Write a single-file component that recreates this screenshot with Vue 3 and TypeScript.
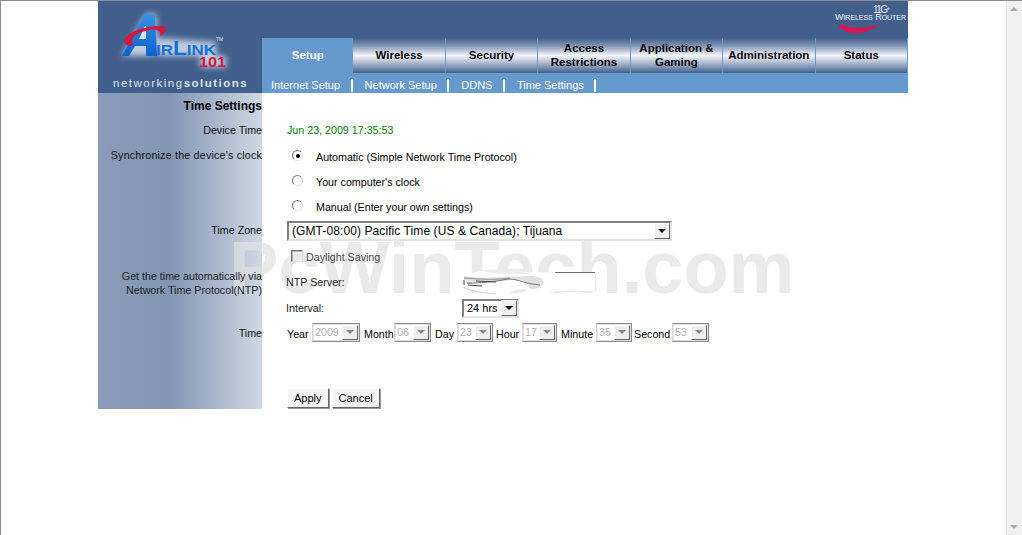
<script setup lang="ts">
const tabs = [
  { lines: ['Setup'], active: true },
  { lines: ['Wireless'] },
  { lines: ['Security'] },
  { lines: ['Access', 'Restrictions'] },
  { lines: ['Application &', 'Gaming'] },
  { lines: ['Administration'] },
  { lines: ['Status'] },
]
const subs = ['Internet Setup', 'Network Setup', 'DDNS', 'Time Settings']
const radios = [
  { label: 'Automatic (Simple Network Time Protocol)', on: true },
  { label: "Your computer's clock", on: false },
  { label: 'Manual (Enter your own settings)', on: false },
]
const times = [
  { label: 'Year', value: '2009', lw: 25, gap: 0, w: 48 },
  { label: 'Month', value: '06', lw: 30, gap: 4, w: 37 },
  { label: 'Day', value: '23', lw: 22, gap: 4, w: 36 },
  { label: 'Hour', value: '17', lw: 26, gap: 3, w: 35 },
  { label: 'Minute', value: '35', lw: 35, gap: 4, w: 36 },
  { label: 'Second', value: '53', lw: 38, gap: 2, w: 37 },
]
</script>

<template>
  <div class="page">
    <div class="frame">
      <header class="header">
        <div class="logo">
          <svg class="logo-svg" width="164" height="93" viewBox="0 0 164 93">
            <defs>
              <filter id="glow" x="-30%" y="-30%" width="160%" height="160%">
                <feGaussianBlur stdDeviation="3" />
              </filter>
              <linearGradient id="ablue" x1="0" y1="0" x2="0" y2="1">
                <stop offset="0" stop-color="#3b93e4" />
                <stop offset="1" stop-color="#0c62cc" />
              </linearGradient>
            </defs>
            <g filter="url(#glow)" opacity="0.8">
              <polygon points="24,56 48,14 58,14 60,56 118,56 118,42 60,38 56,56" fill="#dfe8f5" />
              <rect x="102" y="56" width="26" height="11" fill="#dfe8f5" />
            </g>
            <polygon points="24,56 47,14 57,14 59,56 48,56 48,46 37,46 31,56" fill="url(#ablue)" />
            <polygon points="47,26 48,26 48,39 41,39" fill="#dbe8fa" />
            <path d="M27 43 C 23 36, 42 25, 66 26 C 70 30, 66 34, 62 36 C 64 31, 60 29, 52 30 C 40 32, 30 38, 36 44 C 32 47, 28 46, 27 43 Z" fill="#d3173f" />
            <text class="logo-irlink" x="58" y="55" textLength="60" lengthAdjust="spacingAndGlyphs">IR<tspan class="logo-big">L</tspan>INK</text>
            <text class="logo-101" x="101" y="67" textLength="27" lengthAdjust="spacingAndGlyphs">101</text>
            <text class="logo-tm" x="118" y="41">TM</text>
          </svg>
          <div class="tagline">networking<b>solutions</b></div>
        </div>
        <div class="nav">
          <div class="brand">
            <svg width="90" height="36" viewBox="0 0 90 36">
              <path d="M20 25 C 30 36, 48 34, 62 23 C 48 28, 34 28, 23 23 Z" fill="#d5174f" />
              <text class="brand-11g" x="55" y="12" textLength="17">11G<tspan dy="-3" class="brand-tm">+</tspan></text>
              <text class="brand-name" x="17" y="19" textLength="71" lengthAdjust="spacing">W<tspan class="brand-sm">IRELESS</tspan> R<tspan class="brand-sm">OUTER</tspan></text>
            </svg>
          </div>
          <div class="tabs">
            <div v-for="tab in tabs" :key="tab.lines[0]" class="tab" :class="{ active: tab.active }">
              <span v-for="line in tab.lines" :key="line">{{ line }}</span>
            </div>
          </div>
          <div class="subnav">
            <span v-for="s in subs" :key="s" class="sub">{{ s }}</span>
          </div>
        </div>
      </header>

      <main class="content">
        <div class="watermark">PcWinTech.com</div>

        <div class="row title-row">
          <div class="label title">Time Settings</div>
        </div>

        <div class="row device-row">
          <div class="label">Device Time</div>
          <div class="field green">Jun 23, 2009 17:35:53</div>
        </div>

        <div class="row sync-row">
          <div class="label wide">Synchronize the device's clock</div>
          <div class="field radios">
            <div v-for="r in radios" :key="r.label" class="radio-line">
              <span class="radio" :class="{ on: r.on }"></span>
              <span>{{ r.label }}</span>
            </div>
          </div>
        </div>

        <div class="row zone-row">
          <div class="label">Time Zone</div>
          <div class="field">
            <div class="select zone">
              <span class="select-text">(GMT-08:00) Pacific Time (US &amp; Canada); Tijuana</span>
              <span class="arrow"></span>
            </div>
          </div>
        </div>

        <div class="row daylight-row">
          <div class="label"></div>
          <div class="field daylight">
            <span class="check"></span>
            <span class="faint">Daylight Saving</span>
          </div>
        </div>

        <div class="row ntp-row">
          <div class="label ntp-label">Get the time automatically via<br />Network Time Protocol(NTP)</div>
          <div class="field ntp">
            <div class="ntp-line">
              <span class="ntp-name">NTP Server:</span>
              <svg class="scribble" width="136" height="30" viewBox="0 0 136 30">
                <path d="M0 8 C 14 3, 30 0, 50 3 C 60 4, 80 5, 93 4 L 133 4 L 133 23 L 90 24 C 70 24, 60 18, 48 24 C 32 28, 12 26, 1 20 Z" fill="#fff" />
                <path d="M2 8 C 20 12, 40 8, 70 8 C 84 9, 84 16, 76 20 C 60 24, 72 13, 56 12 C 36 12, 16 16, 2 12 Z" fill="#e0e0e0" />
                <path d="M20 3 C 36 0, 54 2, 70 6 C 50 6, 34 6, 20 3 Z" fill="#ececec" />
                <path d="M93 4.500 L 133 4.500" stroke="#6e6e6e" stroke-width="1" />
                <path d="M133.500 4 V 23.500 H 92" fill="none" stroke="#ececec" stroke-width="1" />
                <path d="M2 10 C 14 11, 30 13, 48 10" fill="none" stroke="#a8a8a8" stroke-width="1.500" />
                <path d="M10 15 C 22 15, 36 13, 46 11 C 54 11, 60 14, 70 16 L 78 17" fill="none" stroke="#777" stroke-width="1" />
                <path d="M2 12 L 2 17 M5 15 L 10 15 M6 17 L 20 18 M14 13 L 34 14" stroke="#444" stroke-width="1" />
                <path d="M1 19 C 10 24, 24 25, 34 26" fill="none" stroke="#cfcfcf" stroke-width="1" />
              </svg>
            </div>
            <div class="ntp-line">
              <span class="ntp-name">Interval:</span>
              <div class="select interval">
                <span class="select-text">24 hrs</span>
                <span class="arrow"></span>
              </div>
            </div>
          </div>
        </div>

        <div class="row time-row">
          <div class="label">Time</div>
          <div class="field times">
            <template v-for="t in times" :key="t.label">
              <span class="time-label" :style="{ width: t.lw + 'px', marginLeft: t.gap + 'px' }">{{ t.label }}</span>
              <div class="select disabled" :style="{ width: t.w + 'px' }">
                <span class="select-text">{{ t.value }}</span>
                <span class="arrow"></span>
              </div>
            </template>
          </div>
        </div>

        <div class="row button-row">
          <div class="label"></div>
          <div class="field buttons">
            <button class="btn" type="button">Apply</button>
            <button class="btn" type="button">Cancel</button>
          </div>
        </div>
      </main>
    </div>
    <aside class="scrollbar">
      <span class="sb-up"></span>
      <span class="sb-down"></span>
    </aside>
  </div>
</template>

<style>
html, body { margin: 0; padding: 0; background: #fff; overflow: hidden; }
</style>

<style scoped>
.page {
  position: relative;
  box-sizing: border-box;
  width: 1022px;
  height: 535px;
  padding: 1px 16px 0 97px;
  border-top: 1px solid #8c8c8c;
  border-left: 1px solid #8c8c8c;
  background: #fff;
  font-family: "Liberation Sans", Arial, sans-serif;
  font-size: 10.7px;
  color: #000;
  overflow: hidden;
}
.frame {
  width: 810px;
  margin-top: -1px;
}
.header {
  display: flex;
  height: 92px;
  background: #425f8c;
}
.logo {
  position: relative;
  width: 164px;
  flex: none;
  margin-top: -1px;
}
.logo-svg { display: block; }
.logo-irlink { font: bold 15px "Liberation Sans", sans-serif; fill: #1270d8; }
.logo-big { font-size: 20px; }
.logo-101 { font: bold 15px "Liberation Sans", sans-serif; fill: #d3173f; }
.logo-tm { font: 5px "Liberation Sans", sans-serif; fill: #dfe8f5; }
.tagline {
  position: absolute;
  left: 15px;
  top: 76px;
  color: #dfe3ea;
  font-size: 11.5px;
  letter-spacing: 1.5px;
  white-space: nowrap;
  line-height: 14px;
}
.tagline b { font-weight: bold; }
.nav {
  position: relative;
  flex: 1;
  display: flex;
  flex-direction: column;
}
.brand {
  position: absolute;
  top: 0;
  right: 0;
}
.brand svg { display: block; }
.brand-11g { font: 10px "Liberation Sans", sans-serif; fill: #e8ecf3; }
.brand-tm { font-size: 6px; }
.brand-name { font: 9px "Liberation Sans", sans-serif; fill: #f0f3f8; }
.brand-sm { font-size: 7px; }
.tabs {
  display: flex;
  margin-top: 37px;
  height: 35px;
}
.tab {
  flex: 1 1 0;
  box-sizing: border-box;
  display: flex;
  flex-direction: column;
  align-items: center;
  justify-content: center;
  padding-bottom: 2px;
  border-right: 1px solid #6699cc;
  background: linear-gradient(#425f8c 0, #7f93b3 22%, #f4f5f8 50%, #8ea0bd 80%, #425f8c 100%);
  font-weight: bold;
  font-size: 11.5px;
  line-height: 14px;
  text-align: center;
}
.tab.active {
  background: #6699cc;
  color: #fff;
  border-right: 0;
}
.subnav {
  flex: 1;
  display: flex;
  align-items: center;
  background: #6699cc;
  color: #fff;
  font-size: 11px;
}
.sub {
  display: flex;
  align-items: center;
  height: 13px;
  padding: 0 10.5px 0 12px;
  border-right: 2px solid #fff;
  margin-top: 4px;
  white-space: nowrap;
}
.sub:first-child { padding-left: 9px; }
.content {
  position: relative;
  height: 316px;
  background: linear-gradient(90deg, #8a9bb8 0, #8296b4 44%, #cfd8e4 100%) 0 0 / 164px 100% no-repeat;
}
.watermark {
  position: absolute;
  left: 131px;
  top: 140px;
  font-size: 74px;
  line-height: 70px;
  font-weight: bold;
  color: rgba(225, 225, 225, .7);
  white-space: nowrap;
}
.row {
  position: relative;
  display: flex;
}
.label {
  width: 164px;
  flex: none;
  box-sizing: border-box;
  text-align: right;
  color: #111;
  line-height: 13px;
}
.label.wide { letter-spacing: .2px; white-space: nowrap; }
.title {
  font-size: 12px;
  font-weight: bold;
  line-height: 14px;
  color: #000;
}
.field { margin-left: 25px; line-height: 13px; }
.title-row { padding-top: 6px; height: 25px; box-sizing: border-box; }
.device-row { padding-top: 6px; height: 31px; box-sizing: border-box; }
.green { color: #008000; }
.sync-row { height: 72px; }
.radios {
  display: flex;
  flex-direction: column;
  gap: 12px;
  margin-left: 25px;
  padding-top: 2px;
}
.radio-line {
  display: flex;
  align-items: center;
  height: 13px;
  gap: 13px;
  padding-left: 5px;
}
.radio {
  position: relative;
  top: -2px;
  width: 11px;
  height: 11px;
  box-sizing: border-box;
  border-radius: 50%;
  border: 1px solid;
  border-color: #777 #ddd #e8e8e8 #777;
  background: #fff;
  display: flex;
  align-items: center;
  justify-content: center;
}
.radio.on::after {
  content: "";
  width: 4px;
  height: 4px;
  border-radius: 50%;
  background: #000;
}
.zone-row { height: 29px; }
.zone-row .label { padding-top: 3px; }
.select {
  display: flex;
  align-items: center;
  justify-content: space-between;
  box-sizing: border-box;
  height: 20px;
  border: 2px solid;
  border-color: #808080 #e4e4e4 #e4e4e4 #808080;
  background: #fff;
}
.select-text { padding-left: 3px; white-space: nowrap; }
.zone { width: 385px; font-size: 12px; letter-spacing: .09px; }
.arrow {
  position: relative;
  flex: none;
  width: 16px;
  height: 16px;
  box-sizing: border-box;
  background: #f1f1f1;
  border: 1px solid;
  border-color: #fff #666 #666 #fff;
}
.arrow::after {
  content: "";
  position: absolute;
  left: 3px;
  top: 5px;
  border-style: solid;
  border-width: 4px 4px 0 4px;
  border-color: #000 transparent transparent;
}
.daylight-row { height: 20px; }
.daylight { display: flex; align-items: flex-start; margin-left: 29px; }
.check {
  width: 12px;
  height: 12px;
  box-sizing: border-box;
  border: 1px solid;
  border-color: #777 #ddd #ddd #777;
  margin-right: 3px;
  background: transparent;
  box-shadow: inset 1px 1px 0 #aaa;
}
.faint { color: #444; margin-top: 1px; }
.ntp-row { height: 53px; }
.ntp-label { margin-top: -1px; color: #222; line-height: 14px; }
.ntp { margin-left: 24px; }
.ntp-line {
  position: relative;
  display: flex;
  align-items: center;
  height: 26px;
}
.ntp-line:first-child { height: 25px; }
.ntp-name { width: 176px; flex: none; color: #222; }
.scribble {
  position: absolute;
  left: 176px;
  top: -2px;
}
.interval {
  width: 57px;
  font-size: 11px;
  height: 19px;
}
.time-row { height: 65px; }
.time-row .label { padding-top: 4px; }
.times { display: flex; align-items: flex-start; margin-left: 25px; }
.time-label { flex: none; margin-top: 5px; white-space: nowrap; }
.disabled {
  height: 19px;
  color: #b0b0b0;
  border-width: 1px;
  border-color: #8a8a8a #8a8a8a #8a8a8a #d8d8d8;
  box-shadow: inset 0 0 0 1px #e4e4e4;
}
.disabled .arrow {
  width: 16px;
  height: 15px;
  margin-right: 1px;
  background: #eee;
}
.disabled .arrow::after {
  top: 4px;
  border-top-color: #888;
}
.times .select-text { padding-left: 2px; }
.buttons { display: flex; gap: 3px; margin-left: 25px; }
.btn {
  height: 20px;
  box-sizing: border-box;
  padding: 0 6px;
  font: 11px "Liberation Sans", sans-serif;
  color: #000;
  background: #f4f4f4;
  border: 1px solid;
  border-color: #fff #666 #666 #fff;
  box-shadow: 1px 1px 0 #999;
}
.scrollbar {
  position: absolute;
  top: 0;
  right: 0;
  bottom: 0;
  width: 16px;
  background: #f0f0f0;
  border-left: 1px solid #e8e8e8;
  box-sizing: border-box;
}
.sb-up, .sb-down {
  position: absolute;
  left: 3px;
  border-style: solid;
  border-color: transparent;
}
.sb-up {
  top: 6px;
  border-width: 0 4px 4px 4px;
  border-bottom-color: #a8a8a8;
}
.sb-down {
  bottom: 6px;
  border-width: 4px 4px 0 4px;
  border-top-color: #a8a8a8;
}
</style>
